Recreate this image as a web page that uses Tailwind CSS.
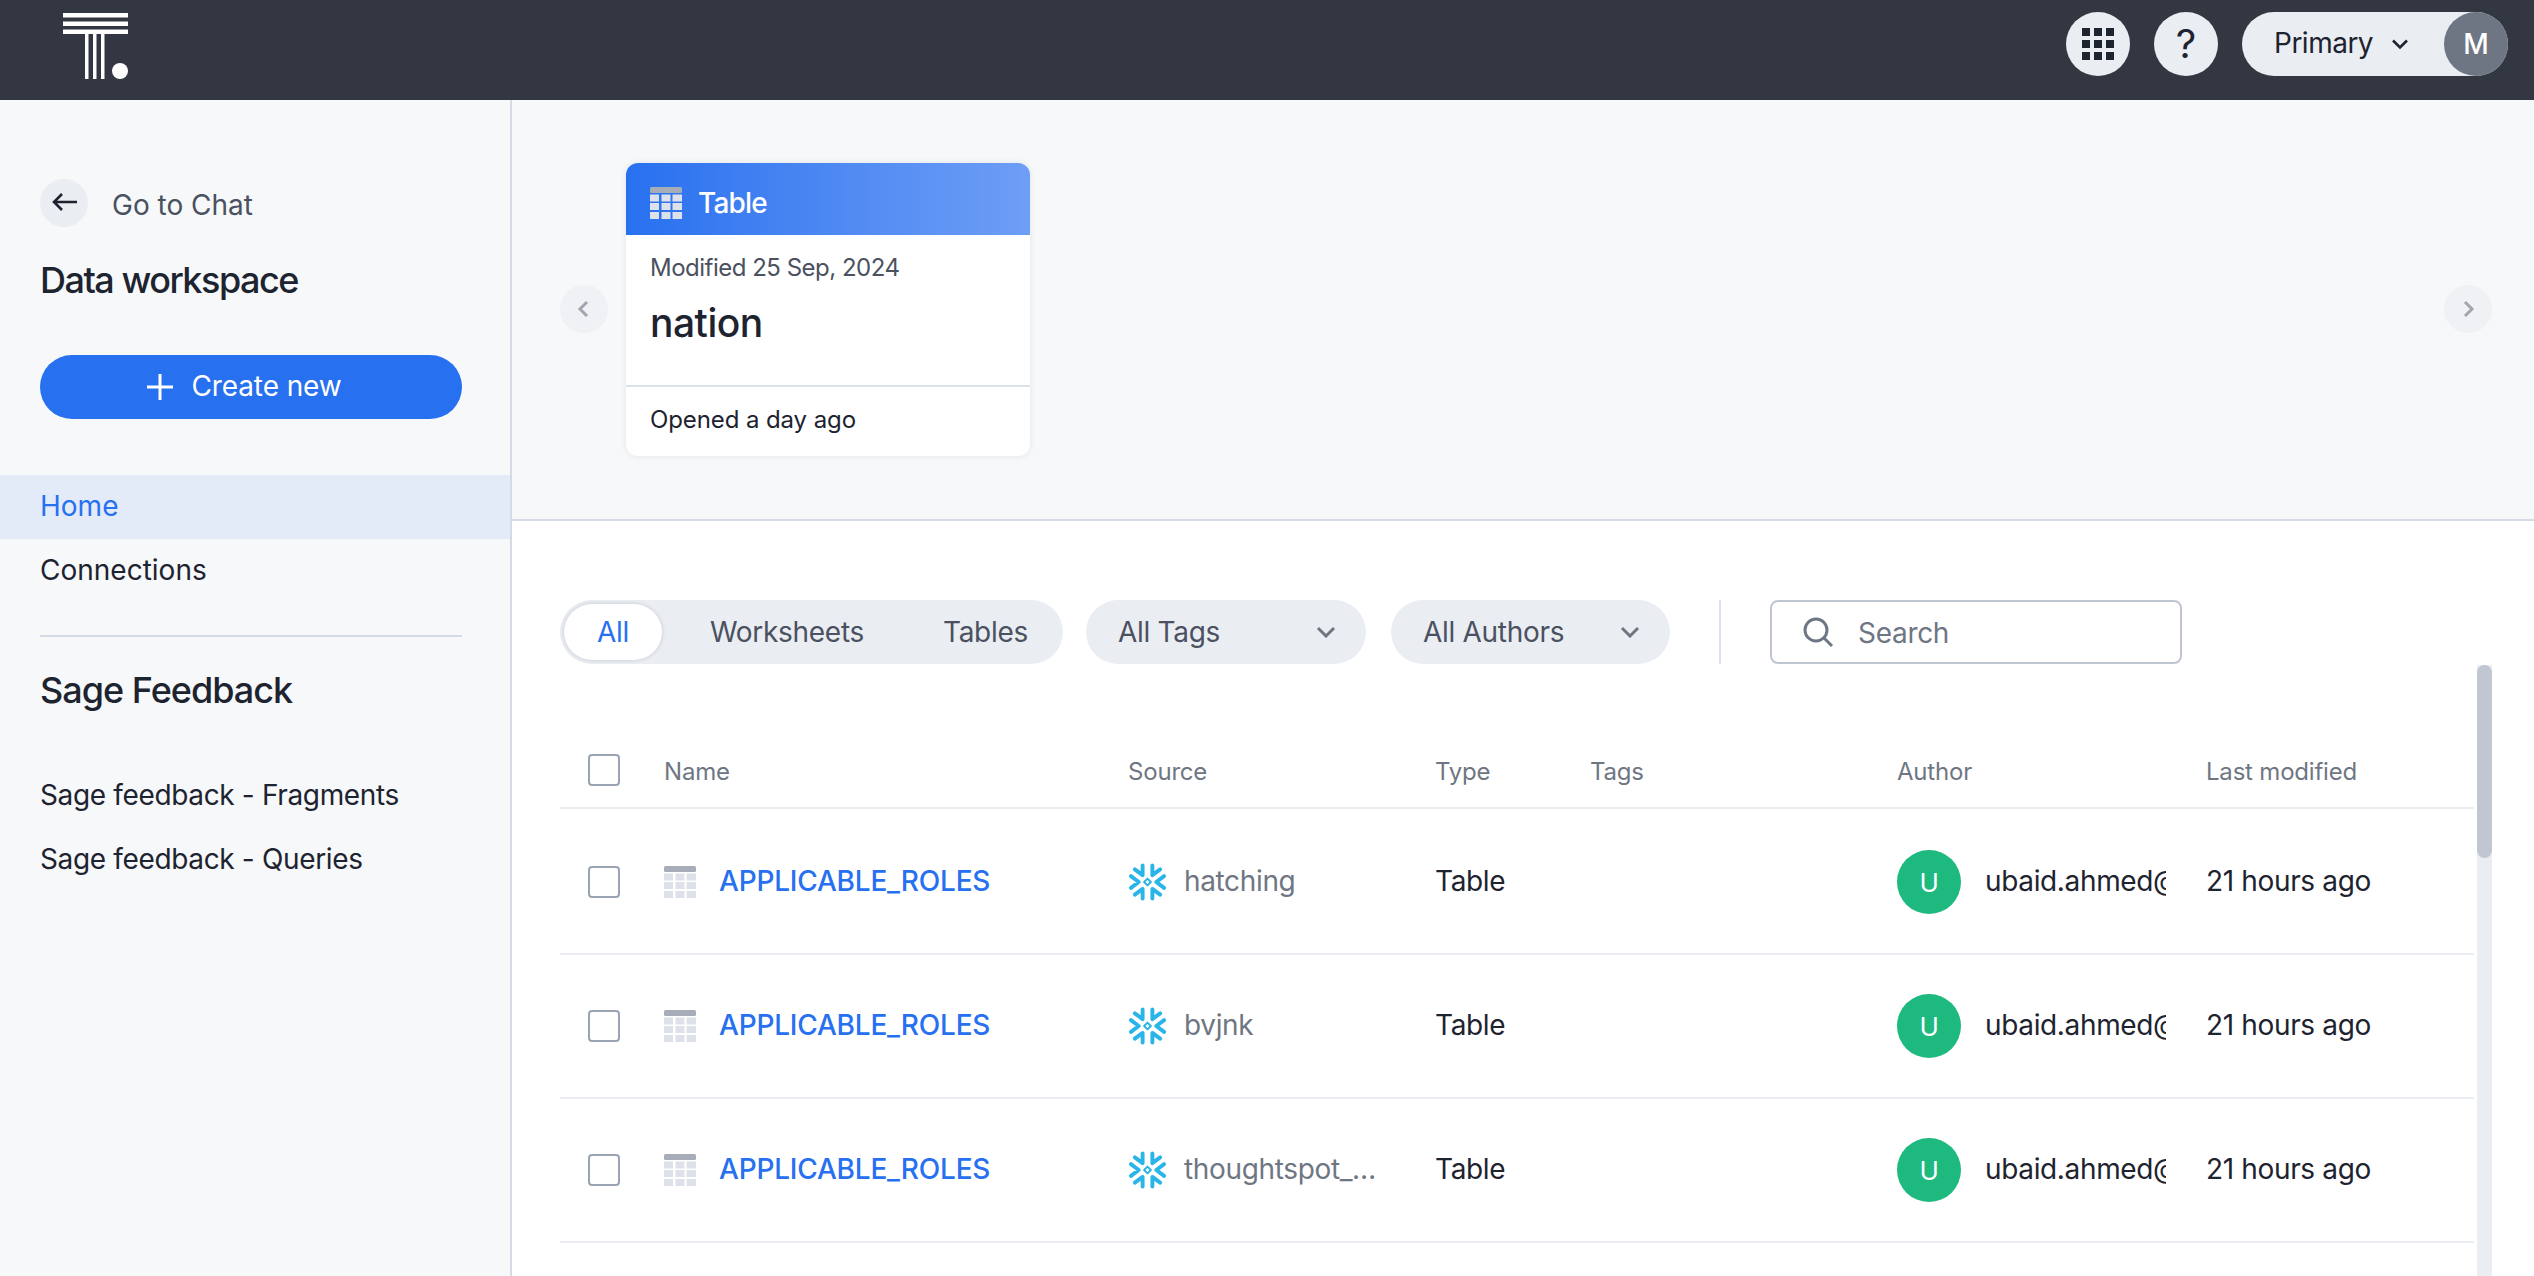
<!DOCTYPE html>
<html>
<head>
<meta charset="utf-8">
<script src="https://cdn.jsdelivr.net/npm/@tailwindcss/browser@4"></script>
</head>
<body class="w-[2534px] h-[1276px] overflow-hidden bg-white font-['Inter',sans-serif] text-[#1d232f]">
<header class="h-[100px] bg-[#323742] flex items-start justify-between pl-[63px] pr-[26px]">
  <svg class="w-[65px] h-[79px]" viewBox="0 0 65 79"><g fill="#fff"><rect x="0" y="13" width="65" height="4.500"/><rect x="0" y="21.500" width="65" height="4.500"/><rect x="0" y="29.500" width="65" height="4.500"/><rect x="22" y="34" width="3.500" height="45"/><rect x="30" y="34" width="3.500" height="45"/><rect x="38" y="34" width="3.500" height="45"/><circle cx="57" cy="71" r="8"/></g></svg>
  <div class="flex items-center gap-6 pt-3">
    <div class="w-16 h-16 rounded-full bg-[#eaedf2] flex items-center justify-center">
      <div class="grid grid-cols-3 gap-1 w-8 h-8">
        <i class="bg-[#1d232f] w-2 h-2"></i><i class="bg-[#1d232f] w-2 h-2"></i><i class="bg-[#1d232f] w-2 h-2"></i>
        <i class="bg-[#1d232f] w-2 h-2"></i><i class="bg-[#1d232f] w-2 h-2"></i><i class="bg-[#1d232f] w-2 h-2"></i>
        <i class="bg-[#1d232f] w-2 h-2"></i><i class="bg-[#1d232f] w-2 h-2"></i><i class="bg-[#1d232f] w-2 h-2"></i>
      </div>
    </div>
    <div class="w-16 h-16 rounded-full bg-[#eaedf2] flex items-center justify-center text-[40px] text-[#1d232f]">?</div>
    <div class="w-[266px] h-16 rounded-full bg-[#eaedf2] flex items-center pl-[32px]">
      <span class="text-[28px] tracking-[-0.5px] text-[#1d232f] w-[112px] leading-none -mt-[2px]">Primary</span>
      <svg class="w-4 h-3 ml-[6px]" viewBox="0 0 16 12" fill="none" stroke="#1d232f" stroke-width="2.600"><path d="M1 2.500 L8 9.500 L15 2.500"/></svg>
      <div class="ml-auto w-16 h-16 rounded-full bg-[#6f7683] text-white text-[28px] font-medium flex items-center justify-center">M</div>
    </div>
  </div>
</header>
<div class="flex h-[1176px]">
  <aside class="w-[512px] shrink-0 bg-[#f6f8fa] border-r-2 border-[#d5dbe5] pt-[79px]">
    <div class="px-10">
      <div class="flex items-center gap-6 h-12">
        <div class="w-12 h-12 rounded-full bg-[#eaedf2] flex items-center justify-center">
          <svg class="w-7 h-7 -mt-0.5 ml-[1px]" viewBox="0 0 28 28" fill="none" stroke="#1d232f" stroke-width="2.600"><path d="M26 14 H3 M11 6 L3 14 L11 22"/></svg>
        </div>
        <span class="text-[28px] text-[#4a5160] mt-[4px]">Go to Chat</span>
      </div>
      <h2 class="text-[36px] font-medium leading-[44px] mt-[31px] tracking-[-1.5px] text-[#1d232f]">Data workspace</h2>
      <button class="mt-[53px] w-[422px] h-16 rounded-full bg-[#2770ef] text-white text-[28px] flex items-center justify-center gap-[18px] pr-[13px]">
        <svg class="w-[26px] h-[26px]" viewBox="0 0 26 26" stroke="#fff" stroke-width="3"><path d="M13 0 V26 M0 13 H26"/></svg>
        <span class="-mt-[2px] tracking-[-0.1px]">Create new</span>
      </button>
    </div>
    <nav class="mt-[56px] text-[28px]">
      <div class="h-[64px] bg-[#e3ebf9] text-[#2770ef] flex items-center px-10 pb-[3px]">Home</div>
      <div class="h-[64px] flex items-center px-10 pb-[2px]">Connections</div>
    </nav>
    <div class="ml-10 w-[422px] mt-[32px] h-0.5 bg-[#d5dbe5]"></div>
    <h2 class="px-10 mt-[31px] text-[36px] font-medium leading-[44px] tracking-[-1px]">Sage Feedback</h2>
    <div class="mt-[51px] text-[28px] tracking-[-0.35px]">
      <div class="h-[64px] flex items-center px-10">Sage feedback - Fragments</div>
      <div class="h-[64px] flex items-center px-10">Sage feedback - Queries</div>
    </div>
  </aside>
  <main class="flex-1 min-w-0 flex flex-col">
    <section class="h-[421px] shrink-0 bg-[#f6f8fa] border-b-2 border-[#d5dbe5] flex items-start pl-[48px] pr-[42px] pt-[63px]">
      <div class="w-12 h-12 rounded-full bg-[#eff1f4] flex items-center justify-center mt-[122px]">
        <svg class="w-4 h-5" viewBox="0 0 16 20" fill="none" stroke="#a0a6b0" stroke-width="3"><path d="M11 3 L4 10 L11 17"/></svg>
      </div>
      <article class="ml-[18px] w-[404px] h-[293px] rounded-[12px] bg-white overflow-hidden shadow-[0_0_6px_rgba(50,60,80,0.1)] flex flex-col">
        <div class="h-[72px] shrink-0 bg-gradient-to-r from-[#2770ef] to-[#6e9ef5] flex items-center pl-6 pt-[7px] gap-4 text-white text-[28px] font-medium tracking-[-0.8px]">
          <svg class="w-8 h-8" viewBox="0 0 32 32"><rect width="32" height="6" rx="1.500" fill="#a6acb8"/><g fill="#dde1ea"><rect y="7.500" width="9" height="7"/><rect x="11.500" y="7.500" width="9" height="7"/><rect x="22.500" y="7.500" width="9.500" height="7"/><rect y="16" width="9" height="7"/><rect x="11.500" y="16" width="9" height="7"/><rect x="22.500" y="16" width="9.500" height="7"/><rect y="25" width="9" height="7"/><rect x="11.500" y="25" width="9" height="7"/><rect x="22.500" y="25" width="9.500" height="7"/></g></svg>
          Table
        </div>
        <div class="h-[152px] shrink-0 px-6 pt-[17px] border-b-2 border-[#dde1ea]">
          <div class="text-[24px] leading-8 text-[#4a5160] tracking-[-0.5px]">Modified 25 Sep, 2024</div>
          <div class="text-[39px] font-medium leading-[48px] mt-[15px] tracking-[-0.5px]">nation</div>
        </div>
        <div class="flex-1 flex items-center px-6 text-[24px] pb-[3px] tracking-[-0.1px]">Opened a day ago</div>
      </article>
      <div class="ml-auto w-12 h-12 rounded-full bg-[#eff1f4] flex items-center justify-center mt-[122px]">
        <svg class="w-4 h-5" viewBox="0 0 16 20" fill="none" stroke="#a0a6b0" stroke-width="3"><path d="M5 3 L12 10 L5 17"/></svg>
      </div>
    </section>
    <section class="flex-1 min-h-0 relative pl-[48px] pt-[79px] overflow-hidden">
      <div class="flex items-center h-16 text-[28px] text-[#4a5160] tracking-[-0.3px]">
        <div class="w-[503px] h-16 rounded-full bg-[#eaedf2] flex items-center pl-1">
          <span class="w-[98px] h-14 rounded-full bg-white text-[#2770ef] flex items-center justify-center shadow-[0_0_4px_rgba(50,60,80,0.2)]">All</span>
          <span class="ml-[48px]">Worksheets</span>
          <span class="ml-[79px]">Tables</span>
        </div>
        <div class="ml-[23px] w-[280px] h-16 rounded-full bg-[#eaedf2] flex items-center justify-between pl-8 pr-[30px]">
          All Tags
          <svg class="w-5 h-3" viewBox="0 0 20 12" fill="none" stroke="#6f7683" stroke-width="3"><path d="M2 2 L10 10 L18 2"/></svg>
        </div>
        <div class="ml-[25px] w-[279px] h-16 rounded-full bg-[#eaedf2] flex items-center justify-between pl-8 pr-[30px]">
          All Authors
          <svg class="w-5 h-3" viewBox="0 0 20 12" fill="none" stroke="#6f7683" stroke-width="3"><path d="M2 2 L10 10 L18 2"/></svg>
        </div>
        <div class="ml-[49px] w-0.5 h-16 bg-[#dde1ea]"></div>
        <div class="ml-[49px] w-[412px] h-16 rounded-lg border-2 border-[#bfc5d1] flex items-center pl-[30px] gap-[24px] text-[#6f7683] bg-white">
          <svg class="w-8 h-8" viewBox="0 0 32 32" fill="none" stroke="#6f7683" stroke-width="3"><circle cx="14" cy="14" r="11"/><path d="M22 22 L30 30"/></svg>
          <span class="mt-[2px]">Search</span>
        </div>
      </div>
      <div class="w-[1914px] mt-[76px]">
        <div class="grid grid-cols-[104px_464px_307px_155px_307px_309px_1fr] h-[69px] items-start border-b-2 border-[#eaedf2] text-[24px] text-[#6f7683] tracking-[-0.2px]">
          <div class="pl-[28px] pt-[14px]"><div class="w-[32px] h-[32px] rounded-[4px] border-2 border-[#9aa3b3]"></div></div>
          <div class="pt-[16px] leading-8">Name</div><div class="pt-[16px] leading-8">Source</div><div class="pt-[16px] leading-8">Type</div><div class="pt-[16px] leading-8">Tags</div><div class="pt-[16px] leading-8">Author</div><div class="pt-[16px] leading-8">Last modified</div>
        </div>

        <div class="grid grid-cols-[104px_464px_307px_155px_307px_309px_1fr] h-[146px] pt-[2px] items-center border-b-2 border-[#eaedf2] text-[28px] tracking-[-0.35px]">
          <div class="pl-[28px]"><div class="w-[32px] h-[32px] rounded-[4px] border-2 border-[#9aa3b3]"></div></div>
          <div class="flex items-center gap-[23px]">
            <svg class="w-8 h-8 shrink-0" viewBox="0 0 32 32"><rect width="32" height="6" rx="1.500" fill="#a6acb8"/><g fill="#dde1ea"><rect y="7.500" width="9" height="7"/><rect x="11.500" y="7.500" width="9" height="7"/><rect x="22.500" y="7.500" width="9.500" height="7"/><rect y="16" width="9" height="7"/><rect x="11.500" y="16" width="9" height="7"/><rect x="22.500" y="16" width="9.500" height="7"/><rect y="25" width="9" height="7"/><rect x="11.500" y="25" width="9" height="7"/><rect x="22.500" y="25" width="9.500" height="7"/></g></svg>
            <span class="text-[#2770ef] font-medium -mt-[2px] tracking-[-0.2px]">APPLICABLE_ROLES</span>
          </div>
          <div class="flex items-center gap-[17px] min-w-0">
            <svg class="w-[39px] h-10 shrink-0" viewBox="0 0 40 40" fill="none" stroke="#29b5e8" stroke-width="4" stroke-linecap="round" stroke-linejoin="round"><path d="M15 3 V13 L7 7 M25 3 V13 L33 7 M15 37 V27 L7 33 M25 37 V27 L33 33 M3 14 L11 20 L3 26 M37 14 L29 20 L37 26"/><path d="M20 16.500 L23.500 20 L20 23.500 L16.500 20 Z" stroke-width="2"/></svg>
            <span class="text-[#6f7683] -mt-[2px]">hatching</span>
          </div>
          <div class="-mt-[2px]">Table</div>
          <div></div>
          <div class="flex items-center gap-6 pr-[40px] min-w-0">
            <div class="w-16 h-16 shrink-0 rounded-full bg-[#1db97f] text-white text-[26px] flex items-center justify-center">U</div>
            <span class="overflow-hidden whitespace-nowrap -mt-[2px]">ubaid.ahmed@</span>
          </div>
          <div class="-mt-[2px]">21 hours ago</div>
        </div>

        <div class="grid grid-cols-[104px_464px_307px_155px_307px_309px_1fr] h-[144px] items-center border-b-2 border-[#eaedf2] text-[28px] tracking-[-0.35px]">
          <div class="pl-[28px]"><div class="w-[32px] h-[32px] rounded-[4px] border-2 border-[#9aa3b3]"></div></div>
          <div class="flex items-center gap-[23px]">
            <svg class="w-8 h-8 shrink-0" viewBox="0 0 32 32"><rect width="32" height="6" rx="1.500" fill="#a6acb8"/><g fill="#dde1ea"><rect y="7.500" width="9" height="7"/><rect x="11.500" y="7.500" width="9" height="7"/><rect x="22.500" y="7.500" width="9.500" height="7"/><rect y="16" width="9" height="7"/><rect x="11.500" y="16" width="9" height="7"/><rect x="22.500" y="16" width="9.500" height="7"/><rect y="25" width="9" height="7"/><rect x="11.500" y="25" width="9" height="7"/><rect x="22.500" y="25" width="9.500" height="7"/></g></svg>
            <span class="text-[#2770ef] font-medium -mt-[2px] tracking-[-0.2px]">APPLICABLE_ROLES</span>
          </div>
          <div class="flex items-center gap-[17px] min-w-0">
            <svg class="w-[39px] h-10 shrink-0" viewBox="0 0 40 40" fill="none" stroke="#29b5e8" stroke-width="4" stroke-linecap="round" stroke-linejoin="round"><path d="M15 3 V13 L7 7 M25 3 V13 L33 7 M15 37 V27 L7 33 M25 37 V27 L33 33 M3 14 L11 20 L3 26 M37 14 L29 20 L37 26"/><path d="M20 16.500 L23.500 20 L20 23.500 L16.500 20 Z" stroke-width="2"/></svg>
            <span class="text-[#6f7683] -mt-[2px]">bvjnk</span>
          </div>
          <div class="-mt-[2px]">Table</div>
          <div></div>
          <div class="flex items-center gap-6 pr-[40px] min-w-0">
            <div class="w-16 h-16 shrink-0 rounded-full bg-[#1db97f] text-white text-[26px] flex items-center justify-center">U</div>
            <span class="overflow-hidden whitespace-nowrap -mt-[2px]">ubaid.ahmed@</span>
          </div>
          <div class="-mt-[2px]">21 hours ago</div>
        </div>

        <div class="grid grid-cols-[104px_464px_307px_155px_307px_309px_1fr] h-[144px] items-center border-b-2 border-[#eaedf2] text-[28px] tracking-[-0.35px]">
          <div class="pl-[28px]"><div class="w-[32px] h-[32px] rounded-[4px] border-2 border-[#9aa3b3]"></div></div>
          <div class="flex items-center gap-[23px]">
            <svg class="w-8 h-8 shrink-0" viewBox="0 0 32 32"><rect width="32" height="6" rx="1.500" fill="#a6acb8"/><g fill="#dde1ea"><rect y="7.500" width="9" height="7"/><rect x="11.500" y="7.500" width="9" height="7"/><rect x="22.500" y="7.500" width="9.500" height="7"/><rect y="16" width="9" height="7"/><rect x="11.500" y="16" width="9" height="7"/><rect x="22.500" y="16" width="9.500" height="7"/><rect y="25" width="9" height="7"/><rect x="11.500" y="25" width="9" height="7"/><rect x="22.500" y="25" width="9.500" height="7"/></g></svg>
            <span class="text-[#2770ef] font-medium -mt-[2px] tracking-[-0.2px]">APPLICABLE_ROLES</span>
          </div>
          <div class="flex items-center gap-[17px] min-w-0">
            <svg class="w-[39px] h-10 shrink-0" viewBox="0 0 40 40" fill="none" stroke="#29b5e8" stroke-width="4" stroke-linecap="round" stroke-linejoin="round"><path d="M15 3 V13 L7 7 M25 3 V13 L33 7 M15 37 V27 L7 33 M25 37 V27 L33 33 M3 14 L11 20 L3 26 M37 14 L29 20 L37 26"/><path d="M20 16.500 L23.500 20 L20 23.500 L16.500 20 Z" stroke-width="2"/></svg>
            <span class="text-[#6f7683] -mt-[2px]">thoughtspot_…</span>
          </div>
          <div class="-mt-[2px]">Table</div>
          <div></div>
          <div class="flex items-center gap-6 pr-[40px] min-w-0">
            <div class="w-16 h-16 shrink-0 rounded-full bg-[#1db97f] text-white text-[26px] flex items-center justify-center">U</div>
            <span class="overflow-hidden whitespace-nowrap -mt-[2px]">ubaid.ahmed@</span>
          </div>
          <div class="-mt-[2px]">21 hours ago</div>
        </div>
      </div>
      <div class="absolute right-[42px] top-[144px] bottom-0 w-[15px] bg-[#eaedf2]">
        <div class="h-[193px] rounded-full bg-[#c0c6d2]"></div>
      </div>
    </section>
  </main>
</div>
</body>
</html>
